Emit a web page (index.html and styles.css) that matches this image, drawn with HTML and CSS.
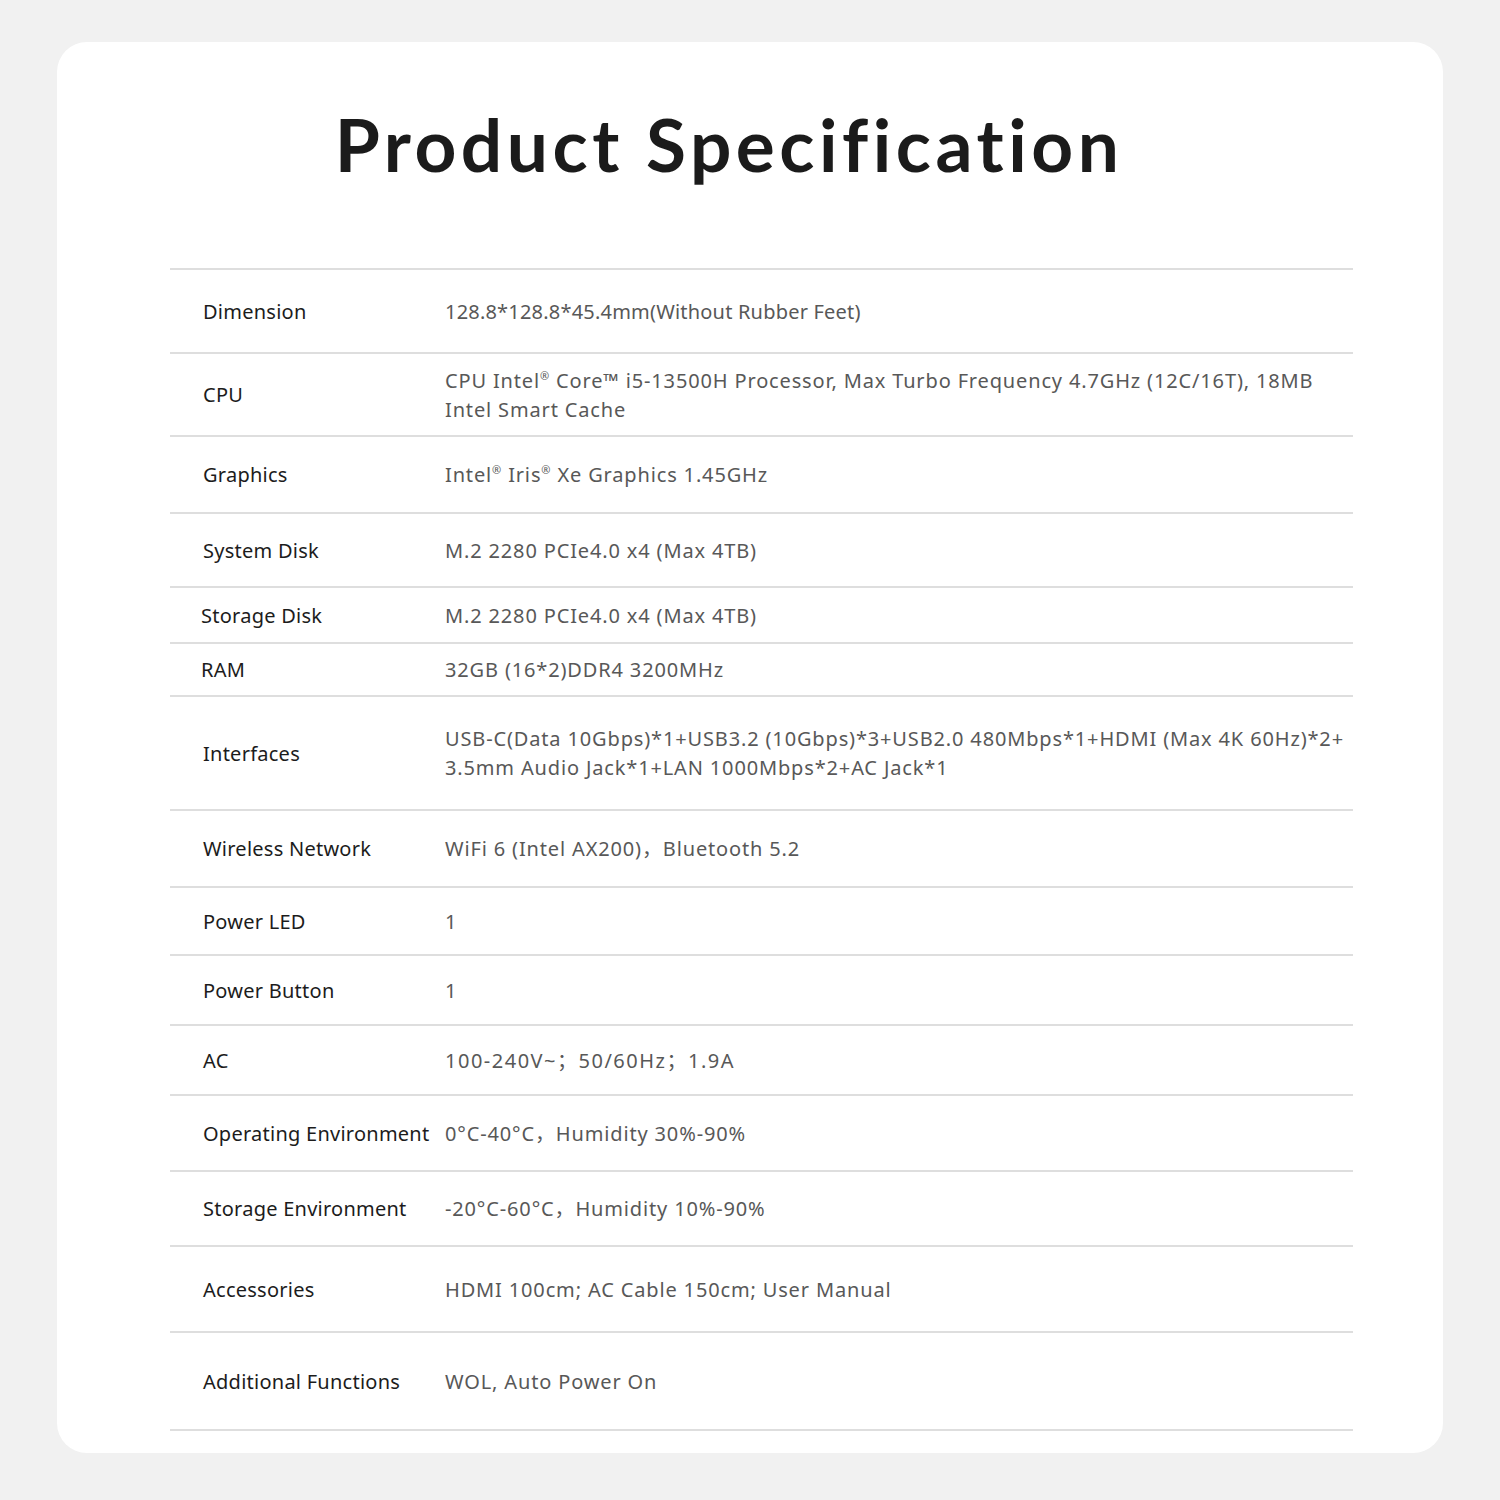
FILE: index.html
```html
<!DOCTYPE html>
<html lang="en">
<head>
<meta charset="utf-8">
<title>Product Specification</title>
<link rel="stylesheet" href="styles.css">
</head>
<body>
<main class="card">
  <h1 class="title">Product Specification</h1>
  <div class="specs">
    <div class="row h84"><div class="label">Dimension</div><div class="value tight">128.8*128.8*45.4mm(Without Rubber Feet)</div></div>
    <div class="row h83"><div class="label">CPU</div><div class="value">CPU Intel<sup>®</sup> Core™ i5-13500H Processor, Max Turbo Frequency 4.7GHz (12C/16T), 18MB<br>Intel Smart Cache</div></div>
    <div class="row h77"><div class="label">Graphics</div><div class="value">Intel<sup>®</sup> Iris<sup>®</sup> Xe Graphics 1.45GHz</div></div>
    <div class="row h74"><div class="label">System Disk</div><div class="value">M.2 2280 PCIe4.0 x4 (Max 4TB)</div></div>
    <div class="row h56"><div class="label shift">Storage Disk</div><div class="value">M.2 2280 PCIe4.0 x4 (Max 4TB)</div></div>
    <div class="row h53"><div class="label shift">RAM</div><div class="value">32GB (16*2)DDR4 3200MHz</div></div>
    <div class="row h114"><div class="label">Interfaces</div><div class="value">USB-C(Data 10Gbps)*1+USB3.2 (10Gbps)*3+USB2.0 480Mbps*1+HDMI (Max 4K 60Hz)*2+<br>3.5mm Audio Jack*1+LAN 1000Mbps*2+AC Jack*1</div></div>
    <div class="row h77"><div class="label">Wireless Network</div><div class="value">WiFi 6 (Intel AX200)，Bluetooth 5.2</div></div>
    <div class="row h68"><div class="label">Power LED</div><div class="value">1</div></div>
    <div class="row h70"><div class="label">Power Button</div><div class="value">1</div></div>
    <div class="row h70"><div class="label">AC</div><div class="value wide">100-240V~；50/60Hz；1.9A</div></div>
    <div class="row h76"><div class="label">Operating Environment</div><div class="value">0°C-40°C，Humidity 30%-90%</div></div>
    <div class="row h75"><div class="label">Storage Environment</div><div class="value">-20°C-60°C，Humidity 10%-90%</div></div>
    <div class="row h86"><div class="label">Accessories</div><div class="value">HDMI 100cm; AC Cable 150cm; User Manual</div></div>
    <div class="row h98"><div class="label">Additional Functions</div><div class="value">WOL, Auto Power On</div></div>
  </div>
</main>
</body>
</html>
```
FILE: styles.css
```css
html, body {
  margin: 0;
  padding: 0;
  background: #f1f1f1;
}
body {
  padding: 42px 57px 47px 57px;
  font-family: "Noto Sans", "Noto Sans CJK SC", sans-serif;
}
.card {
  background: #ffffff;
  border-radius: 30px;
  height: 1411px;
  box-sizing: border-box;
  padding: 0 90px 0 113px;
  display: flex;
  flex-direction: column;
}
.title {
  margin: 0 -90px 0 -113px;
  height: 226px;
  display: flex;
  align-items: center;
  justify-content: center;
  padding: 0 42px 22px 0;
  box-sizing: border-box;
  font-family: "Lato", sans-serif;
  font-size: 73px;
  font-weight: 700;
  letter-spacing: 4.5px;
  color: #1b1b1b;
}
.specs {
  border-top: 2px solid #dedede;
}
.row {
  display: grid;
  grid-template-columns: 275px 1fr;
  align-items: center;
  border-bottom: 2px solid #dedede;
  box-sizing: border-box;
}
.label {
  padding-left: 33px;
  font-size: 20px;
  letter-spacing: 0.25px;
  color: #1c1c1c;
}
.label.shift { padding-left: 31px; }
.value {
  font-size: 20px;
  line-height: 29px;
  color: #585858;
  letter-spacing: 0.85px;
}
.value.tight { letter-spacing: 0.2px; }
.value.wide { letter-spacing: 1.5px; }
.value sup {
  font-size: 0.55em;
  line-height: 0;
  vertical-align: 0.7em;
}
.h84 { height: 84px; }
.h83 { height: 83px; }
.h77 { height: 77px; }
.h74 { height: 74px; }
.h56 { height: 56px; }
.h53 { height: 53px; }
.h114 { height: 114px; }
.h68 { height: 68px; }
.h70 { height: 70px; }
.h76 { height: 76px; }
.h75 { height: 75px; }
.h86 { height: 86px; }
.h98 { height: 98px; }
```
